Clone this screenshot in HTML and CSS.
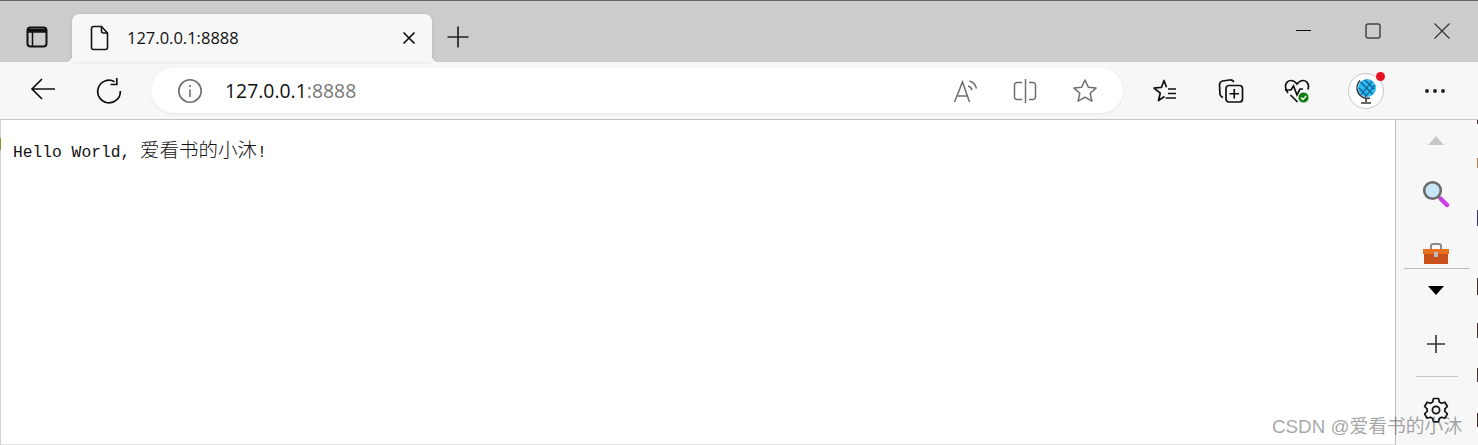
FILE: index.html
```html
<!DOCTYPE html>
<html>
  <head>
    <title>127.0.0.1:8888</title>
    <link rel="stylesheet" href="styles.css">
  </head>
  <body>
    <div class="titlebar">
      <div class="btn tabtoggle">
        <svg width="24" height="24" viewBox="0 0 24 24" fill="none" stroke="#111" stroke-width="2"><rect x="2.5" y="2.5" width="19" height="19" rx="3"/><path d="M3 4.5h18v2.500H3z" fill="#111" stroke-width="1.500"/><path d="M7.500 7v14" stroke-width="1.500"/></svg>
      </div>
      <div class="tab">
        <svg class="fileicon" width="20" height="26" viewBox="0 0 20 26" fill="none" stroke="#111" stroke-width="1.600"><path d="M3.500 1.500h8l6 6.500v14.500a2 2 0 0 1-2 2h-12a2 2 0 0 1-2-2v-19a2 2 0 0 1 2-2z"/><path d="M11.500 1.500v4.500a2 2 0 0 0 2 2h4"/></svg>
        <span class="tabtitle">127.0.0.1:8888</span>
        <svg class="tabclose" width="14" height="14" viewBox="0 0 14 14" stroke="#111" stroke-width="1.700"><path d="M1.500 1.500l11 11M12.500 1.500l-11 11"/></svg>
      </div>
      <div class="btn newtab">
        <svg width="24" height="24" viewBox="0 0 24 24" stroke="#222" stroke-width="1.700"><path d="M12 1.500v21M1.500 12h21"/></svg>
      </div>
      <div class="winctrls">
        <div class="winbtn"><svg width="16" height="16" viewBox="0 0 16 16" stroke="#111" stroke-width="1"><path d="M0 7.500h15"/></svg></div>
        <div class="winbtn"><svg width="16" height="16" viewBox="0 0 16 16" fill="none" stroke="#444" stroke-width="1.500"><rect x="1" y="1" width="14" height="14" rx="2"/></svg></div>
        <div class="winbtn"><svg width="16" height="16" viewBox="0 0 16 16" stroke="#333" stroke-width="1.200"><path d="M.5.500l15 15M15.500.500l-15 15"/></svg></div>
      </div>
    </div>

    <div class="toolbar">
      <div class="btn backbtn">
        <svg width="26" height="24" viewBox="0 0 26 24" fill="none" stroke="#111" stroke-width="1.700"><path d="M25 12H2M12 2L2 12l10 10"/></svg>
      </div>
      <div class="btn">
        <svg width="26" height="26" viewBox="0 0 26 26" fill="none" stroke="#111" stroke-width="1.700"><path d="M18.500 3.700A11.300 11.300 0 1 0 24.300 13"/><path d="M18.800.500v6.500h-6.300" transform="translate(2 -.5)"/></svg>
      </div>
      <div class="addressbar">
        <div class="btn infobtn">
          <svg width="26" height="26" viewBox="0 0 26 26" fill="none" stroke="#6e6e6e" stroke-width="1.600"><circle cx="13" cy="13" r="11.200"/><path d="M13 11.500v7.500M13 7v2"/></svg>
        </div>
        <span class="host">127.0.0.1</span><span class="port">:8888</span>
        <div class="btn readbtn">
          <svg width="26" height="26" viewBox="0 0 26 26" fill="none" stroke="#6e6e6e" stroke-width="1.500"><path d="M1.500 24L9.500 4l7 20M4 18h11"/><path d="M15 8c2 .5 3.500 2 4 4M16.500 3c3.500 1 6 3.500 7 7.500"/></svg>
        </div>
        <div class="btn">
          <svg width="26" height="26" viewBox="0 0 26 26" fill="none" stroke="#6e6e6e" stroke-width="1.500"><path d="M10 4.500H5a2.500 2.500 0 0 0-2.500 2.500v12a2.500 2.500 0 0 0 2.500 2.500h5M17 4.500h4a2.500 2.500 0 0 1 2.500 2.500v12a2.500 2.500 0 0 1-2.500 2.500h-4"/><path d="M13.500 1v24"/></svg>
        </div>
        <div class="btn">
          <svg width="26" height="26" viewBox="0 0 26 26" fill="none" stroke="#6e6e6e" stroke-width="1.500" stroke-linejoin="round"><path d="M13 2l3.300 7.300 7.700.800-5.800 5.200 1.700 7.800L13 19.100l-6.900 4 1.700-7.800L2 10.100l7.700-.800z"/></svg>
        </div>
      </div>
      <div class="btn favbtn">
        <svg width="26" height="26" viewBox="0 0 26 26" fill="none" stroke="#111" stroke-width="1.700" stroke-linejoin="round"><path d="M12.500 18.500l-6 4 1.700-7.300L2 10l7.500-.7L12 2.500l2.500 6.800"/><path d="M16 11h8M16 15.500h8M13.500 20h10.500"/></svg>
      </div>
      <div class="btn">
        <svg width="26" height="26" viewBox="0 0 26 26" fill="none" stroke="#111" stroke-width="1.700"><path d="M5 19.500c-1.500-.5-2.500-1.500-3-3L1.500 7c0-2 1-3.500 3-4l7-1c2-.2 3.500.5 4.500 2"/><rect x="8" y="7.500" width="16.500" height="16.500" rx="3"/><path d="M16.250 11v9.500M11.500 15.750h9.500"/></svg>
      </div>
      <div class="btn healthbtn">
        <svg width="26" height="26" viewBox="0 0 26 26" fill="none" stroke="#111" stroke-width="1.700"><path d="M4 15C2 12.500 1.500 10.500 1.500 8.500 1.500 5 4 2.500 7 2.500c2.500 0 4.500 1.500 6 3.500 1.500-2 3.500-3.500 6-3.500 3 0 5.500 2.500 5.500 6 0 1-.2 2-.6 3"/><path d="M1 12h6l2.500-4 3.500 9 3-6h3"/><path d="M6.500 17l7 7"/><circle cx="19.500" cy="19.500" r="5.500" fill="#107c10" stroke="#f7f7f7" stroke-width="1"/><path d="M17 19.500l2 2 3.200-3.500" stroke="#fff" stroke-width="1.300"/></svg>
      </div>
      <div class="btn profilebtn">
        <div class="avatar">
          <svg width="26" height="28" viewBox="0 0 26 28"><path d="M7 3.500a10.500 10.500 0 0 0 10 17.500" fill="none" stroke="#333" stroke-width="1.600"/><path d="M13 21v4M8 26h10" stroke="#333" stroke-width="1.600"/><circle cx="14" cy="11" r="9" fill="#2bb8ea"/><path d="M7.500 5l12 12M12 3l9 9M6 11l8 8M19 4L8 18M22 8L12 20" stroke="#135a96" stroke-width="1.100"/></svg>
        </div>
        <div class="reddot"></div>
      </div>
      <div class="btn morebtn">
        <div class="dot"></div><div class="dot"></div><div class="dot"></div>
      </div>
    </div>

    <div class="main">
      <div class="page">
        <p class="hello">Hello World, <span class="cjk">爱看书的小沐</span>!</p>
      </div>
      <div class="sidebar">
        <div class="sidebtn s-up"><div class="tri-up"></div></div>
        <div class="sidebtn s-search">
          <svg width="28" height="28" viewBox="0 0 28 28"><path d="M17 17l3 3" stroke="#555" stroke-width="3"/><path d="M19 19l6 6" stroke="#c93fe6" stroke-width="4.500" stroke-linecap="round"/><circle cx="10.500" cy="10.500" r="8.300" fill="#c6e6f8" stroke="#6a6a6a" stroke-width="2.600"/></svg>
        </div>
        <div class="sidebtn s-tool">
          <svg width="28" height="22" viewBox="0 0 28 22"><path d="M9 6V3a2 2 0 0 1 2-2h6a2 2 0 0 1 2 2v3" fill="none" stroke="#8a8a8a" stroke-width="2"/><path d="M1 6h26v5H1z" fill="#e8701f"/><path d="M2 11h24v10H2z" fill="#c9501a"/><rect x="12" y="9" width="4" height="5" fill="#bbb"/></svg>
        </div>
        <div class="sideline wide"></div>
        <div class="sidebtn s-down"><div class="tri-down"></div></div>
        <div class="sidebtn s-plus">
          <svg width="20" height="20" viewBox="0 0 20 20" stroke="#333" stroke-width="1.600"><path d="M10 1v18M1 10h18"/></svg>
        </div>
        <div class="sideline short"></div>
        <div class="sidebtn s-gear">
          <svg width="26" height="26" viewBox="0 0 26 26" fill="none" stroke="#111" stroke-width="1.700" stroke-linejoin="round"><path d="M10.500 1.500h5l.8 3.400 2.300 1.300 3.300-1 2.500 4.300-2.500 2.400v2.600l2.500 2.400-2.500 4.300-3.300-1-2.300 1.300-.8 3.400h-5l-.8-3.400-2.300-1.300-3.300 1-2.500-4.300 2.500-2.400v-2.600L1.600 9.500l2.500-4.300 3.300 1 2.300-1.300z"/><circle cx="13" cy="13" r="3.600"/></svg>
        </div>
      </div>
    </div>

    <div class="leftmark"></div>
    <div class="edge"></div>
    <div class="watermark">CSDN @爱看书的小沐</div>
  </body>
</html>
```

FILE: styles.css
```css
html, body{
  margin: 0;
  height: 445px;
  overflow: hidden;
  background-color: #fff;
}
body{
  font-family: "Open Sans", sans-serif;
  color: #111;
}
svg{
  display: block;
}
.btn{
  width: 60px;
  height: 45px;
  flex: none;
  display: flex;
  align-items: center;
  justify-content: center;
}

.titlebar{
  height: 61px;
  background-color: #ccc;
  border-top: 1px solid #666;
  display: flex;
}
.tabtoggle{
  margin: 13px 5px 0 7px;
}
.tab{
  position: relative;
  width: 360px;
  height: 48px;
  margin-top: 13px;
  box-sizing: border-box;
  padding-left: 18px;
  padding-right: 16px;
  background-color: #f7f7f7;
  border-radius: 7px 7px 0 0;
  box-shadow: 0 0 3px rgba(0,0,0,.12);
  display: flex;
  align-items: center;
}
.tab::before, .tab::after{
  content: "";
  position: absolute;
  bottom: 0;
  width: 7px;
  height: 7px;
}
.tab::before{
  left: -7px;
  background: radial-gradient(circle at 0 0, transparent 7px, #f7f7f7 7.5px);
}
.tab::after{
  right: -7px;
  background: radial-gradient(circle at 100% 0, transparent 7px, #f7f7f7 7.5px);
}
.tabtitle{
  margin-left: 17px;
  margin-bottom: 2px;
  font-size: 16.5px;
}
.tabclose{
  margin-left: auto;
}
.newtab{
  width: 52px;
  margin-top: 13px;
}
.winctrls{
  margin-left: auto;
  margin-right: 2px;
  display: flex;
}
.winbtn{
  width: 69px;
  height: 60px;
  display: flex;
  align-items: center;
  justify-content: center;
}

.toolbar{
  height: 58px;
  box-sizing: border-box;
  padding: 6px 0 0 13px;
  background-color: #f7f7f7;
  border-bottom: 1px solid #c4c4c4;
  display: flex;
  gap: 6px;
}
.backbtn{
  padding-bottom: 3px;
  box-sizing: border-box;
}
.addressbar{
  width: 972px;
  height: 45px;
  margin-left: 6px;
  box-sizing: border-box;
  padding-right: 8px;
  background-color: #fff;
  border-radius: 23px;
  box-shadow: 0 1px 3px rgba(0,0,0,.08);
  display: flex;
  align-items: center;
  font-size: 19.4px;
}
.infobtn{
  margin-left: 9px;
  margin-right: 5px;
}
.host{
  color: #111;
}
.port{
  color: #767676;
}
.readbtn{
  margin-left: auto;
  padding-left: 2px;
  box-sizing: border-box;
}
.favbtn{
  margin-left: 6px;
}
.profilebtn{
  position: relative;
  margin: 0 3px;
}
.avatar{
  width: 34px;
  height: 34px;
  border: 1px solid #c8c8c8;
  border-radius: 50%;
  background-color: #fff;
  display: flex;
  align-items: center;
  justify-content: center;
}
.reddot{
  position: absolute;
  left: 40px;
  top: 4px;
  width: 9px;
  height: 9px;
  border-radius: 50%;
  background-color: #e81123;
}
.morebtn{
  gap: 4px;
}
.dot{
  width: 4px;
  height: 4px;
  border-radius: 50%;
  background-color: #222;
}

.main{
  height: 325px;
  display: flex;
}
.page{
  flex: 1;
  border-left: 1px solid #d0d0d0;
  border-bottom: 1px solid #e4e4e4;
}
.hello{
  margin: 17px 0 0 12px;
  font-family: "Liberation Mono", monospace;
  font-size: 16.300px;
  line-height: 24px;
  color: #111;
}
.cjk{
  font-family: "Noto Sans CJK SC", sans-serif;
  font-size: 19.500px;
  font-weight: 300;
  line-height: 24px;
}
.sidebar{
  width: 82px;
  flex: none;
  background-color: #f7f7f7;
  border-left: 1px solid #bdbdbd;
  display: flex;
  flex-direction: column;
}
.sidebtn{
  display: flex;
  align-items: center;
  justify-content: center;
  padding-right: 2px;
}
.s-up{
  height: 40px;
}
.s-search{
  height: 67px;
}
.s-tool{
  height: 41px;
  align-items: flex-end;
  padding-bottom: 3px;
  box-sizing: border-box;
}
.s-down{
  height: 42px;
}
.s-plus{
  height: 65px;
}
.s-gear{
  height: 65px;
}
.tri-up{
  border-left: 8px solid transparent;
  border-right: 8px solid transparent;
  border-bottom: 9px solid #c8c8c8;
}
.tri-down{
  border-left: 8px solid transparent;
  border-right: 8px solid transparent;
  border-top: 9px solid #000;
}
.sideline{
  height: 1px;
  flex: none;
}
.sideline.wide{
  margin: 0 8px;
  background-color: #bdbdbd;
}
.sideline.short{
  margin: 0 20px;
  background-color: #c8c8c8;
}

.leftmark{
  position: absolute;
  left: 0;
  top: 138px;
  width: 1px;
  height: 12px;
  background-color: #7f9a20;
}
.edge{
  position: absolute;
  right: 0;
  top: 120px;
  width: 1px;
  height: 325px;
  background: linear-gradient(to bottom,
    #5a3a30 0 4px, transparent 4px 38px,
    #b87a40 38px 48px, transparent 48px 90px,
    #333366 90px 106px, transparent 106px 158px,
    #4a2a2a 158px 175px, transparent 175px 203px,
    #4a2a2a 203px 218px, transparent 218px 248px,
    #4a2a2a 248px 262px, transparent 262px 293px,
    #4a2a2a 293px 307px, transparent 307px);
}
.watermark{
  position: absolute;
  left: 1272px;
  top: 414px;
  font-family: "Liberation Sans", "Noto Sans CJK SC", sans-serif;
  font-size: 18.8px;
  line-height: 26px;
  color: rgba(90,90,90,.55);
  white-space: nowrap;
}
```
